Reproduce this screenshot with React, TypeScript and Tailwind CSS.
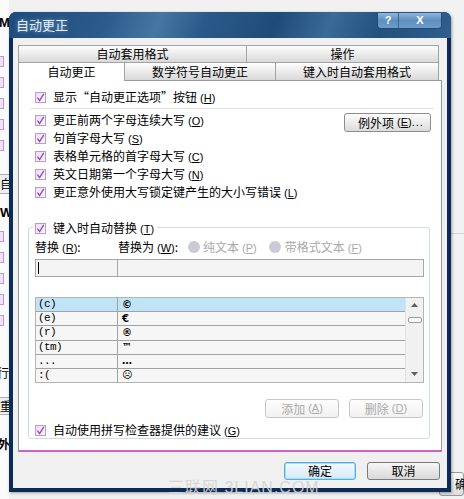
import type { ReactNode } from "react";

const Check = () => (
  <span className="flex h-[11px] w-[11px] shrink-0 items-center justify-center border border-[#b99bd0] bg-gradient-to-br from-[#ecdff5] to-[#fbf7fd]">
    <svg width="9" height="9" viewBox="0 0 9 9">
      <path d="M1.4 4.6 L3.6 7.6 L7.8 0.8" fill="none" stroke="#8e45ba" strokeWidth="1.3" />
    </svg>
  </span>
);

const Key = ({ k }: { k: string }) => (
  <span className="ml-[3px] font-['Liberation_Sans',sans-serif] text-[11px]">
    (<span className="underline underline-offset-1">{k}</span>)
  </span>
);

const CheckRow = ({ children, className = "" }: { children: ReactNode; className?: string }) => (
  <div className={`flex h-[18px] items-center gap-[7px] ${className}`}>
    <Check />
    <span className="whitespace-nowrap leading-none">{children}</span>
  </div>
);

const BgCheck = ({ className = "" }: { className?: string }) => (
  <span className={`-ml-[7px] block h-[11px] w-[11px] shrink-0 border border-[#b99bd0] bg-[#efe2f6] ${className}`} />
);

const tab =
  "flex items-center justify-center border-t border-r border-[#a3a3a3] bg-gradient-to-b from-[#fdfdfd] to-[#d9d9d9] leading-none";

const rows: [string, string][] = [
  ["(c)", "©"],
  ["(e)", "€"],
  ["(r)", "®"],
  ["(tm)", "™"],
  ["...", "…"],
  [":(", "☹"],
];

const LeftBackdrop = () => (
  <div className="flex h-full w-[9px] flex-col overflow-hidden bg-[#fafafa] text-black">
    <span className="-ml-[1px] mt-[16px] font-['Liberation_Sans',sans-serif] text-[13px] font-bold leading-[13px]">M</span>
    <BgCheck className="mt-[27px]" />
    <BgCheck className="mt-[10px]" />
    <BgCheck className="mt-[10px]" />
    <BgCheck className="mt-[10px]" />
    <BgCheck className="mt-[10px]" />
    <div className="mt-[23px] flex h-[20px] shrink-0 items-center border-y border-[#b0b0b0] bg-[#efefef] leading-none">自</div>
    <span className="mt-[12px] font-['Liberation_Sans',sans-serif] text-[13px] font-bold leading-[13px]">W</span>
    <BgCheck className="mt-[12px]" />
    <BgCheck className="mt-[10px]" />
    <BgCheck className="mt-[10px]" />
    <BgCheck className="mt-[10px]" />
    <BgCheck className="mt-[10px]" />
    <span className="-ml-[3px] mt-[40px] leading-[13px]">行</span>
    <div className="mt-[18px] flex h-[18px] shrink-0 items-center border-y border-[#b0b0b0] bg-[#efefef] leading-none">重</div>
    <span className="-ml-[2px] mt-[22px] font-bold leading-[13px]">外</span>
  </div>
);

const RightBackdrop = () => (
  <div className="flex h-full w-[24px] flex-col bg-[#f2f2f2]">
    <div className="mt-[233px] h-px bg-[#d6d6d6]" />
    <div className="ml-[-1px] mt-[238px] flex h-[24px] items-center rounded-[3px] border border-[#9a9a9a] bg-gradient-to-b from-[#fafafa] to-[#dedede] pl-[15px] leading-none">
      确
    </div>
  </div>
);

const Dialog = () => (
  <div className="absolute left-[9px] top-[12px] flex h-[480px] w-[442px] flex-col rounded-t-[7px] bg-[#0c2b56] px-[4px] pb-[4px] shadow-[1px_1px_3px_rgba(0,0,0,0.35)]">
    {/* title bar */}
    <div className="-mx-[4px] flex h-[26px] shrink-0 items-start rounded-t-[7px] bg-[linear-gradient(110deg,#1f4c7c_0%,#2b5b8b_22%,#4677a3_34%,#2a5a89_44%,#1f4b7a_60%,#3a6a98_72%,#22507f_84%,#2f5f8f_100%)] pl-[7px] pr-[9px]">
      <span className="mt-[6px] text-[13px] leading-[13px] text-[#e4eef9] [text-shadow:0_0_4px_rgba(180,210,240,0.6)]">
        自动更正
      </span>
      <div className="ml-auto mt-px flex overflow-hidden rounded-b-[4px] border border-t-0 border-[#274b73]">
        <div className="flex h-[15px] w-[21px] items-center justify-center border-r border-[#3c6590] bg-gradient-to-b from-[#8fb6da] via-[#5e8fbe] to-[#6c9cca] font-['Liberation_Sans',sans-serif] text-[11px] font-bold leading-none text-white">
          ?
        </div>
        <div className="flex h-[15px] w-[42px] items-center justify-center bg-gradient-to-b from-[#8fb6da] via-[#5e8fbe] to-[#6c9cca] font-['Liberation_Sans',sans-serif] text-[11px] font-bold leading-none text-white">
          X
        </div>
      </div>
    </div>

    {/* client area */}
    <div className="flex flex-1 flex-col bg-[#f0f0f0] px-[5px] pt-[7px]">
      {/* tabs */}
      <div className="flex h-[17px]">
        <div className={`${tab} w-[229px] border-l`}>自动套用格式</div>
        <div className={`${tab} w-[192px]`}>操作</div>
      </div>
      <div className="relative z-10 flex h-[18px]">
        <div className="-mb-px flex h-[19px] w-[107px] items-center justify-center border-x border-t border-[#a3a3a3] bg-white leading-none">
          自动更正
        </div>
        <div className={`${tab} w-[151px] border-l-0`}>数学符号自动更正</div>
        <div className={`${tab} w-[163px]`}>键入时自动套用格式</div>
      </div>

      {/* panel */}
      <div className="flex h-[372px] w-[424px] flex-col border border-b-2 border-[#9b9b9b] border-b-[#c866c8] bg-white">
        <CheckRow className="mt-[7px] pl-[16px]">
          显示“自动更正选项”按钮<Key k="H" />
        </CheckRow>
        <div className="ml-[11px] mr-[7px] mt-[2px] h-px bg-[#e1e1e1]" />

        <div className="mt-[2px] flex">
          <div className="flex flex-1 flex-col pl-[16px]">
            <CheckRow>
              更正前两个字母连续大写<Key k="O" />
            </CheckRow>
            <CheckRow>
              句首字母大写<Key k="S" />
            </CheckRow>
            <CheckRow>
              表格单元格的首字母大写<Key k="C" />
            </CheckRow>
            <CheckRow>
              英文日期第一个字母大写<Key k="N" />
            </CheckRow>
            <CheckRow>
              更正意外使用大写锁定键产生的大小写错误<Key k="L" />
            </CheckRow>
          </div>
          <div className="mr-[10px] mt-[2px] flex h-[19px] w-[87px] items-center rounded-[3px] border border-[#8c8c8c] bg-gradient-to-b from-[#fdfdfd] to-[#dcdcdc] pl-[13px] leading-none">
            例外项<Key k="E" />
            <span className="font-['Liberation_Sans',sans-serif] text-[11px] tracking-[1px]">...</span>
          </div>
        </div>

        {/* group box */}
        <div className="ml-[9px] mt-[26px] flex w-[402px] flex-col rounded-[3px] border border-[#d3dbe2] pl-[6px]">
          <div className="-ml-[2px] -mt-[9px] flex h-[18px] w-fit items-center gap-[7px] bg-white pl-[2px] pr-[3px]">
            <Check />
            <span className="whitespace-nowrap leading-none">
              键入时自动替换<Key k="T" />
            </span>
          </div>

          <div className="mt-[2px] flex h-[16px] items-center leading-none">
            <span className="w-[83px]">
              替换<Key k="R" />:
            </span>
            <span className="w-[70px]">
              替换为<Key k="W" />:
            </span>
            <span className="h-[12px] w-[12px] rounded-full bg-[#cbcbd6]" />
            <span className="ml-[3px] text-[#a9a9a9]">
              纯文本<Key k="P" />
            </span>
            <span className="ml-[12px] h-[12px] w-[12px] rounded-full bg-[#cbcbd6]" />
            <span className="ml-[4px] text-[#a9a9a9]">
              带格式文本<Key k="F" />
            </span>
          </div>

          <div className="mt-[4px] flex h-[18px] w-[389px] border border-[#a8a8a8] bg-[#f4f4f4]">
            <div className="flex w-[82px] items-center border-r border-[#a8a8a8] pl-[2px]">
              <span className="h-[12px] w-px bg-black" />
            </div>
            <div className="flex-1" />
          </div>

          {/* list */}
          <div className="mt-[20px] flex h-[86px] w-[389px] border border-[#b4b4b4] bg-[#f6f6f6]">
            <div className="flex flex-1 flex-col">
              {rows.map(([a, b], i) => (
                <div
                  key={a}
                  className={`flex ${i === rows.length - 1 ? "flex-1" : "h-[14.2px] border-b border-[#a2a2a2]"} ${
                    i === 0 ? "bg-[#c0e3f5]" : ""
                  }`}
                >
                  <div className="flex w-[82px] items-center border-r border-[#a2a2a2] pl-[2px] font-['Liberation_Mono',monospace] text-[11px] leading-none tracking-[-0.6px]">
                    {a}
                  </div>
                  <div className="flex items-center pl-[4px] font-['DejaVu_Sans',sans-serif] text-[10px] font-bold leading-none">
                    {b}
                  </div>
                </div>
              ))}
            </div>
            <div className="flex w-[18px] flex-col items-center border-l border-[#e2e2e2] bg-[#f1f1f1]">
              <svg className="mt-[5px]" width="7" height="4" viewBox="0 0 7 4">
                <path d="M0 4 L3.5 0 L7 4 Z" fill="#5e5e5e" />
              </svg>
              <div className="mt-[10px] h-[6px] w-[14px] rounded-[2px] border border-[#9e9e9e] bg-[#fafafa]" />
              <svg className="mb-[6px] mt-auto" width="7" height="4" viewBox="0 0 7 4">
                <path d="M0 0 L7 0 L3.5 4 Z" fill="#5e5e5e" />
              </svg>
            </div>
          </div>

          <div className="mt-[16px] flex h-[19px] justify-end gap-[10px] pr-[6px]">
            <div className="flex w-[74px] items-center justify-center rounded-[3px] border border-[#c8c8c8] bg-gradient-to-b from-[#fdfdfd] to-[#f1f1f1] leading-none text-[#aaaaaa]">
              添加<Key k="A" />
            </div>
            <div className="flex w-[74px] items-center justify-center rounded-[3px] border border-[#c8c8c8] bg-gradient-to-b from-[#fdfdfd] to-[#f1f1f1] leading-none text-[#aaaaaa]">
              删除<Key k="D" />
            </div>
          </div>

          <div className="mt-[4px] flex h-[16px] items-center gap-[7px]">
            <Check />
            <span className="whitespace-nowrap leading-none">
              自动使用拼写检查器提供的建议<Key k="G" />
            </span>
          </div>
        </div>
      </div>

      {/* dialog buttons */}
      <div className="mt-[10px] flex justify-end gap-[11px] pr-[2px]">
        <div className="flex h-[18px] w-[72px] items-center justify-center rounded-[3px] border border-[#4fb0e0] bg-gradient-to-b from-[#f4fafe] to-[#d5e9f6] leading-none shadow-[inset_0_0_0_1px_#a9dcf5]">
          确定
        </div>
        <div className="flex h-[18px] w-[73px] items-center justify-center rounded-[3px] border border-[#7a7a7a] bg-gradient-to-b from-[#f6f6f6] to-[#d8d8d8] leading-none">
          取消
        </div>
      </div>
    </div>
  </div>
);

export default function App() {
  return (
    <div className="relative flex h-[499px] w-[464px] justify-between overflow-hidden bg-[#f1f1f1] font-['Noto_Sans_CJK_SC',sans-serif] text-[12px] text-black">
      <LeftBackdrop />
      <RightBackdrop />
      <Dialog />
      <span className="absolute left-[168px] top-[479px] whitespace-nowrap font-['Liberation_Sans','Noto_Sans_CJK_SC',sans-serif] text-[16px] leading-[18px] tracking-[1px] text-[#d4d4d4] opacity-90">
        三联网 3LIAN.COM
      </span>
    </div>
  );
}
